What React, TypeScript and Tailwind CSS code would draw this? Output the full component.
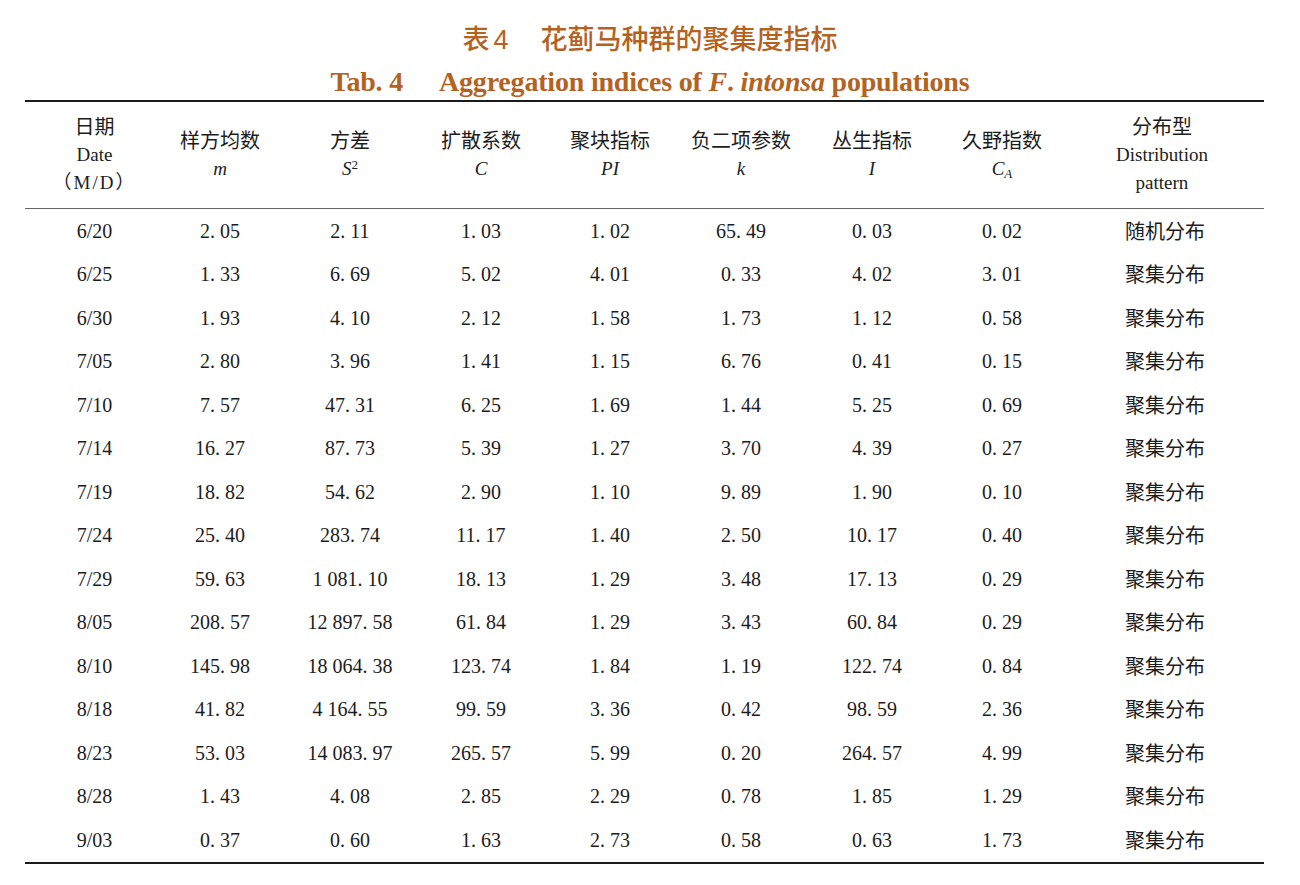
const rows = [
  ["6/20", "2. 05", "2. 11", "1. 03", "1. 02", "65. 49", "0. 03", "0. 02", "随机分布"],
  ["6/25", "1. 33", "6. 69", "5. 02", "4. 01", "0. 33", "4. 02", "3. 01", "聚集分布"],
  ["6/30", "1. 93", "4. 10", "2. 12", "1. 58", "1. 73", "1. 12", "0. 58", "聚集分布"],
  ["7/05", "2. 80", "3. 96", "1. 41", "1. 15", "6. 76", "0. 41", "0. 15", "聚集分布"],
  ["7/10", "7. 57", "47. 31", "6. 25", "1. 69", "1. 44", "5. 25", "0. 69", "聚集分布"],
  ["7/14", "16. 27", "87. 73", "5. 39", "1. 27", "3. 70", "4. 39", "0. 27", "聚集分布"],
  ["7/19", "18. 82", "54. 62", "2. 90", "1. 10", "9. 89", "1. 90", "0. 10", "聚集分布"],
  ["7/24", "25. 40", "283. 74", "11. 17", "1. 40", "2. 50", "10. 17", "0. 40", "聚集分布"],
  ["7/29", "59. 63", "1 081. 10", "18. 13", "1. 29", "3. 48", "17. 13", "0. 29", "聚集分布"],
  ["8/05", "208. 57", "12 897. 58", "61. 84", "1. 29", "3. 43", "60. 84", "0. 29", "聚集分布"],
  ["8/10", "145. 98", "18 064. 38", "123. 74", "1. 84", "1. 19", "122. 74", "0. 84", "聚集分布"],
  ["8/18", "41. 82", "4 164. 55", "99. 59", "3. 36", "0. 42", "98. 59", "2. 36", "聚集分布"],
  ["8/23", "53. 03", "14 083. 97", "265. 57", "5. 99", "0. 20", "264. 57", "4. 99", "聚集分布"],
  ["8/28", "1. 43", "4. 08", "2. 85", "2. 29", "0. 78", "1. 85", "1. 29", "聚集分布"],
  ["9/03", "0. 37", "0. 60", "1. 63", "2. 73", "0. 58", "0. 63", "1. 73", "聚集分布"],
];

const cols = "grid grid-cols-[139px_112px_148px_114px_144px_118px_144px_116px_1fr]";

const Head = ({ zh, children }: { zh: string; children?: React.ReactNode }) => (
  <div className="flex flex-col items-center justify-center text-center leading-[28px]">
    <span className="text-[20px]">{zh}</span>
    {children}
  </div>
);

export default function App() {
  return (
    <div className="w-[1300px] h-[885px] bg-white text-[#1c1c1c] font-['Liberation_Serif','Noto_Sans_CJK_SC',serif]">
      <div className="flex flex-col items-center pt-[22px] gap-[6px] text-[#b4621f]">
        <div className="text-[27px] leading-[36px] font-medium font-['Liberation_Sans','Noto_Sans_CJK_SC',sans-serif]">
          <span>表</span>
          <span className="ml-1">4</span>
          <span className="ml-8">花蓟马种群的聚集度指标</span>
        </div>
        <div className="text-[28px] leading-[36px] font-bold tracking-[-0.2px]">
          Tab. 4<span className="ml-9">Aggregation indices of </span>
          <i>F</i>. <i>intonsa</i> populations
        </div>
      </div>

      <div className="ml-[25px] w-[1239px]">
        <div className={`${cols} h-[109px] border-t-2 border-b border-t-[#1a1a1a] border-b-[#666]`}>
          <div className="flex flex-col items-center justify-center leading-[28px]">
            <span className="text-[20px]">日期</span>
            <span className="text-[19px]">Date</span>
            <span className="text-[19px] tracking-[2px]">（M/D）</span>
          </div>
          <Head zh="样方均数"><i className="text-[19px]">m</i></Head>
          <Head zh="方差">
            <span className="text-[19px]"><i>S</i><sup className="text-[13px]">2</sup></span>
          </Head>
          <Head zh="扩散系数"><i className="text-[19px]">C</i></Head>
          <Head zh="聚块指标"><i className="text-[19px]">PI</i></Head>
          <Head zh="负二项参数"><i className="text-[19px]">k</i></Head>
          <Head zh="丛生指标"><i className="text-[19px]">I</i></Head>
          <Head zh="久野指数">
            <span className="text-[19px]"><i>C</i><sub className="text-[13px] italic">A</sub></span>
          </Head>
          <div className="flex flex-col items-center justify-center leading-[28px]">
            <span className="text-[20px]">分布型</span>
            <span className="text-[19px]">Distribution</span>
            <span className="text-[19px]">pattern</span>
          </div>
        </div>

        <div className="border-b-2 border-[#1a1a1a]">
          {rows.map((r) => (
            <div key={r[0]} className={`${cols} h-[43.5px] items-center text-[20px]`}>
              {r.map((c, i) => (
                <div
                  key={i}
                  className={`text-center whitespace-nowrap ${i === 8 ? "pl-[6px] text-[20px] font-['Noto_Sans_CJK_SC',sans-serif]" : ""}`}
                >
                  {c}
                </div>
              ))}
            </div>
          ))}
        </div>
      </div>
    </div>
  );
}
